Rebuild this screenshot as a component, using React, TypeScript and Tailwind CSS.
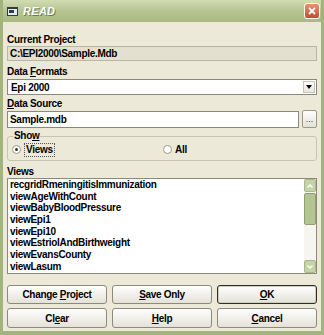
import React from "react";

const views = [
  "recgridRmeningitisImmunization",
  "viewAgeWithCount",
  "viewBabyBloodPressure",
  "viewEpi1",
  "viewEpi10",
  "viewEstriolAndBirthweight",
  "viewEvansCounty",
  "viewLasum",
];

function Label({ children }: { children: React.ReactNode }) {
  return <div className="h-[12px] text-[10px] font-bold leading-[12px] tracking-[-0.3px] text-black">{children}</div>;
}

function Btn({ children, def }: { children: React.ReactNode; def?: boolean }) {
  return (
    <button
      className={
        "h-full flex-1 rounded-[3px] border bg-gradient-to-b from-[#fefefe] to-[#e4e2d8] text-[10px] font-bold tracking-[-0.3px] text-black " +
        (def ? "border-[#2e2e22] shadow-[inset_0_0_0_1px_#cfcdbf]" : "border-[#8c8a7c]")
      }
    >
      {children}
    </button>
  );
}

export default function App() {
  return (
    <div
      className="flex h-[335px] w-[324px] flex-col bg-[#a3b37e] px-[3px] pb-[4px]"
      style={{ fontFamily: '"Liberation Sans", Arial, sans-serif' }}
    >
      {/* title bar */}
      <div className="flex h-[22px] shrink-0 items-center bg-gradient-to-b from-[#d2dcb2] via-[#b6c491] to-[#aab983] pl-[4px] pr-[1px]">
        <svg width="11" height="9" viewBox="0 0 11 9" className="mr-[5px] mt-[1px]">
          <rect x="0" y="0" width="11" height="9" fill="#2f3b46" />
          <rect x="1" y="2" width="9" height="6" fill="#e4eaf0" />
          <rect x="2" y="3" width="5" height="3" fill="#2f3b46" />
        </svg>
        <span className="text-[11px] font-bold italic tracking-[0.3px] text-white [text-shadow:1px_1px_0_#6f7d4e]">
          READ
        </span>
        <div className="ml-auto flex h-[16px] w-[16px] items-center justify-center rounded-[3px] border border-white bg-gradient-to-b from-[#e79378] to-[#c24c2e]">
          <svg width="8" height="8" viewBox="0 0 8 8">
            <path d="M1 1 L7 7 M7 1 L1 7" stroke="white" strokeWidth="1.8" />
          </svg>
        </div>
      </div>

      {/* body */}
      <div className="flex flex-1 flex-col bg-[#ece9d8] px-[4px] pt-[12px]">
        <Label>Current Project</Label>
        <div className="flex h-[15px] items-center border border-[#b8b6a4] bg-[#e3e0d0] px-[2px] text-[10px] font-bold tracking-[-0.3px]">
          C:\EPI2000\Sample.Mdb
        </div>

        <div className="mt-[5px]">
          <Label>
            Data <u>F</u>ormats
          </Label>
        </div>
        <div className="mt-[1px] flex h-[16px] items-center border border-[#8a8a7a] bg-white pl-[3px] text-[10px] font-bold tracking-[-0.3px]">
          <span className="flex-1">Epi 2000</span>
          <div className="mr-[1px] flex h-[12px] w-[12px] items-center justify-center border border-[#c8c6b8] bg-gradient-to-b from-white to-[#e6e4dc]">
            <svg width="6" height="4" viewBox="0 0 6 4">
              <path d="M0 0 H6 L3 4 Z" fill="#000" />
            </svg>
          </div>
        </div>

        <div className="mt-[3px]">
          <Label>
            <u>D</u>ata Source
          </Label>
        </div>
        <div className="flex items-end gap-[3px]">
          <div className="flex h-[17px] flex-1 items-center border border-[#8a8a7a] bg-white px-[2px] text-[10px] font-bold tracking-[-0.3px]">
            Sample.mdb
          </div>
          <button className="flex h-[18px] w-[15px] items-end justify-center rounded-[2px] border border-[#9a988a] bg-gradient-to-b from-white to-[#e3e1d6] pb-[3px] text-[9px] leading-none text-[#333]">
            ...
          </button>
        </div>

        {/* show group */}
        <div className="relative mt-[8px] h-[25px] shrink-0 rounded-[3px] border border-[#c7c5b2]">
          <div className="absolute left-[5px] top-[-7px] bg-[#ece9d8] px-[1px] text-[10px] font-bold leading-[12px] tracking-[-0.3px]">
            Sho<u>w</u>
          </div>
          <div className="flex h-full items-center pt-[2px]">
            <div className="flex w-[155px] items-center pl-[4px]">
              <span className="mr-[3px] flex h-[9px] w-[9px] items-center justify-center rounded-full border border-[#9a9a8a] bg-white">
                <span className="h-[3px] w-[3px] rounded-full bg-[#2a3a1a]" />
              </span>
              <span className="border border-dotted border-[#555] px-[1px] text-[10px] font-bold leading-[12px] tracking-[-0.3px]">
                Views
              </span>
            </div>
            <div className="flex items-center">
              <span className="mr-[3px] h-[9px] w-[9px] rounded-full border border-[#9a9a8a] bg-white" />
              <span className="text-[10px] font-bold tracking-[-0.3px]">All</span>
            </div>
          </div>
        </div>

        <div className="mt-[5px]">
          <Label>Views</Label>
        </div>
        <div className="flex h-[96px] shrink-0 border border-[#8a8a7a] bg-white">
          <div className="flex-1 overflow-hidden pl-[2px]">
            {views.map((v) => (
              <div key={v} className="h-[11.7px] text-[10px] font-bold leading-[12px] tracking-[-0.3px]">
                {v}
              </div>
            ))}
          </div>
          <div className="flex w-[12px] flex-col bg-[#f6f5ef]">
            <div className="flex h-[13px] items-center justify-center rounded-[2px] border border-[#a8b88a] bg-[#c6d3a8]">
              <svg width="6" height="4" viewBox="0 0 6 4">
                <path d="M0.5 3.5 L3 1 L5.5 3.5" stroke="white" strokeWidth="1.4" fill="none" />
              </svg>
            </div>
            <div className="mt-[1px] h-[32px] rounded-[2px] border border-[#8fa068] bg-[#b4c593]" />
            <div className="flex-1" />
            <div className="flex h-[13px] items-center justify-center rounded-[2px] border border-[#a8b88a] bg-[#c6d3a8]">
              <svg width="6" height="4" viewBox="0 0 6 4">
                <path d="M0.5 0.5 L3 3 L5.5 0.5" stroke="white" strokeWidth="1.4" fill="none" />
              </svg>
            </div>
          </div>
        </div>

        <div className="mt-[11px] flex h-[19px] gap-[5px]">
          <Btn>
            Change <u>P</u>roject
          </Btn>
          <Btn>
            <u>S</u>ave Only
          </Btn>
          <Btn def>
            <u>O</u>K
          </Btn>
        </div>
        <div className="mt-[4px] flex h-[20px] gap-[5px]">
          <Btn>
            Cl<u>e</u>ar
          </Btn>
          <Btn>
            <u>H</u>elp
          </Btn>
          <Btn>
            <u>C</u>ancel
          </Btn>
        </div>
      </div>
    </div>
  );
}
